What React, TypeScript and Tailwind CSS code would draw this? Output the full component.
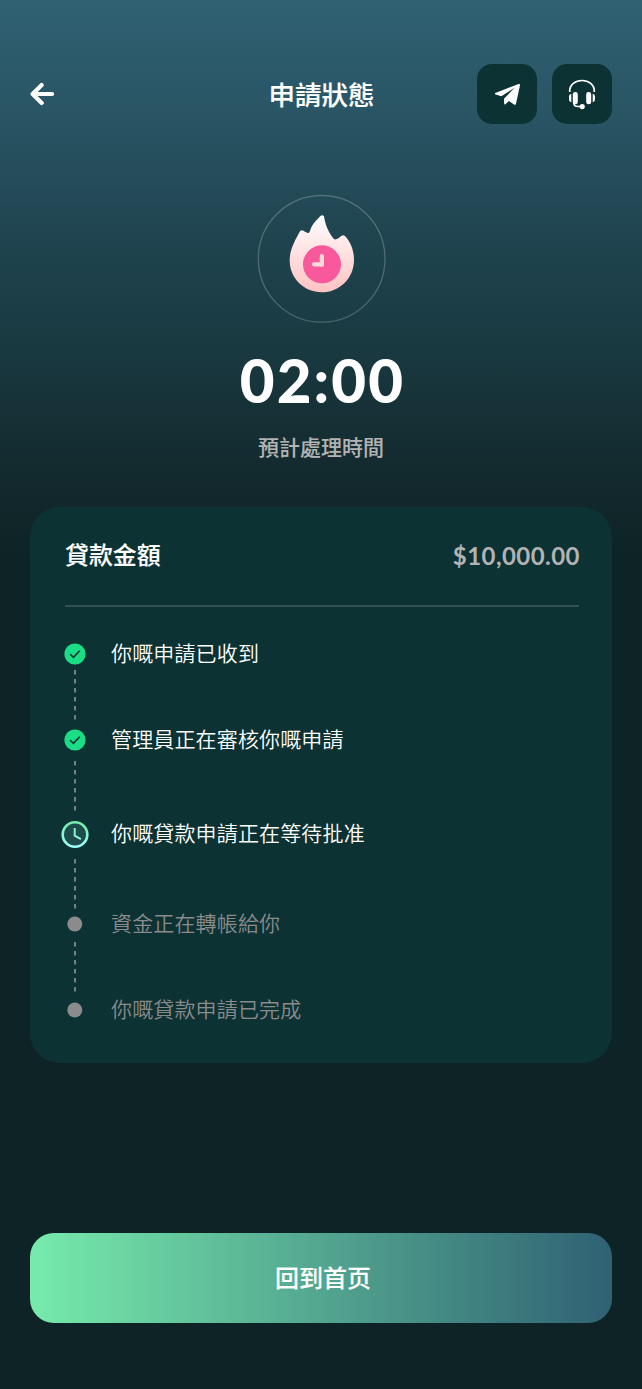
import clsx from "clsx";

type StepStatus = "done" | "active" | "pending";

type Step = {
  label: string;
  status: StepStatus;
  connector?: string;
};

const steps: Step[] = [
  { label: "你嘅申請已收到", status: "done", connector: "h-[58px] pt-[2px]" },
  { label: "管理員正在審核你嘅申請", status: "done", connector: "h-[66.5px] pt-[7px]" },
  { label: "你嘅貸款申請正在等待批准", status: "active", connector: "h-[61.5px] pt-[10.5px]" },
  { label: "資金正在轉帳給你", status: "pending", connector: "h-[58px] pt-[4px]" },
  { label: "你嘅貸款申請已完成", status: "pending" },
];

function BackIcon() {
  return (
    <svg width="26" height="26" viewBox="0 0 26 26" fill="none" stroke="#fff" strokeWidth="4.2" strokeLinecap="round" strokeLinejoin="round">
      <path d="M11.7 4.1 2.6 13l9.1 8.9M3.500 13h18.600" />
    </svg>
  );
}

function PlaneIcon() {
  return (
    <svg width="26" height="24" viewBox="96 95.500 78 72" fill="#fff">
      <path d="M100 128.500 L170 101.500 Q174.500 100 174 105 L162 161 Q160.500 166 156 163 L141 152.500 L130 162 Q127 164 126.500 160 L126 145.500 L158 113 L118 138.500 L101 133 Q97 131 100 128.500Z" />
    </svg>
  );
}

function HeadsetIcon() {
  return (
    <svg width="28" height="32" viewBox="0 -0.800 28 32" fill="none">
      <path d="M1.700 13.200V12.500C1.700 6 7.200 1.700 14 1.700S26.300 6 26.300 12.500V13.200" stroke="#fff" strokeWidth="1.700" />
      <rect x="4.800" y="13.200" width="5" height="12.300" rx="2.400" fill="#fff" />
      <rect x="18.200" y="13.200" width="5" height="12.300" rx="2.400" fill="#fff" />
      <path d="M3.300 15v8.500C1.800 23 1 21.800 1 20.400v-2.500c0-1.400.8-2.500 2.300-2.900ZM24.700 15v8.500c1.500-.5 2.300-1.700 2.300-3.100v-2.500c0-1.400-.8-2.500-2.300-2.900Z" fill="#fff" />
      <path d="M5.500 23.500c.3 2.900 2 4.200 4.600 4.200h3" stroke="#fff" strokeWidth="1.500" />
      <circle cx="14.200" cy="27.800" r="2.600" fill="#fff" />
    </svg>
  );
}

function FlameTimer() {
  return (
    <svg width="130" height="130" viewBox="33 26 390 390" fill="none">
      <defs>
        <linearGradient id="flame" x1="230" y1="89" x2="230" y2="321" gradientUnits="userSpaceOnUse">
          <stop stopColor="#fff" />
          <stop offset="1" stopColor="#ffc2c2" />
        </linearGradient>
      </defs>
      <circle cx="230" cy="220.500" r="190" stroke="#fff" strokeOpacity="0.22" strokeWidth="4" />
      <path
        d="M227 91 Q233 87 237 93 C241 119 250 141 266 160 Q270 164 275 161 Q281 160 285 155 Q292 146 300 152 C317 170 327 194 327 224 C327 278 284 321 230 321 C177 321 134 279 134 225 C134 194 151 163 165 138 Q169 133 175 136 Q180 139 186 142 Q193 145 195 137 C199 119 214 104 227 91Z"
        fill="url(#flame)"
      />
      <circle cx="231" cy="237" r="57" fill="#f7599c" />
      <path d="M230.500 212v25H207" stroke="#ffd9d9" strokeWidth="12.500" strokeLinecap="round" strokeLinejoin="round" />
      <path d="M224.500 231h12.500v12.500h-12.500z" fill="#ffd9d9" />
    </svg>
  );
}

function StepIcon({ status }: { status: StepStatus }) {
  if (status === "done") {
    return (
      <svg width="22" height="22" viewBox="0 0 22 22" fill="none">
        <circle cx="11" cy="11" r="10.600" fill="#1bdd85" />
        <path d="m6.200 11.300 3.200 3.100 6.300-6.700" stroke="#0d3233" strokeWidth="1.600" />
      </svg>
    );
  }

  if (status === "active") {
    return (
      <svg width="28" height="30" viewBox="0 -1.500 28 30" fill="none">
        <defs>
          <linearGradient id="clock" x1="14" y1="0" x2="14" y2="28" gradientUnits="userSpaceOnUse">
            <stop stopColor="#6feca5" />
            <stop offset="1" stopColor="#a2ffff" />
          </linearGradient>
        </defs>
        <circle cx="14" cy="14" r="12.300" fill="#1e4c4c" stroke="url(#clock)" strokeWidth="2.600" />
        <path d="M13.700 7.500v7.700l6.200 3.400" stroke="url(#clock)" strokeWidth="2" />
      </svg>
    );
  }

  return (
    <svg width="16" height="16" viewBox="0 0 16 16">
      <circle cx="7.800" cy="8" r="7.500" fill="#8b8b8b" />
    </svg>
  );
}

function Connector({ className }: { className: string }) {
  return (
    <div className={clsx("flex w-7 justify-center", className)}>
      <svg width="2" height="50" viewBox="0 0 2 50">
        <path d="M1 0v50" stroke="#868b8b" strokeWidth="1.800" strokeDasharray="4.400 4.600" />
      </svg>
    </div>
  );
}

export default function App() {
  return (
    <main className="flex h-[1389px] w-full flex-col bg-[#0e2325] bg-[linear-gradient(180deg,#2f6173_0px,#295463_120px,#1f444f_240px,#193940_350px,#132a2e_470px,#0e2325_555px)] px-[30px] font-[Lato,'Noto_Sans_CJK_TC',sans-serif] text-white">
      <header className="grid grid-cols-[1fr_auto_1fr] items-center pt-[64.4px]">
        <button aria-label="返回" className="-mt-px justify-self-start">
          <BackIcon />
        </button>
        <h1 className="pt-px pl-px text-[26.5px] leading-10 font-medium [-webkit-text-stroke:0.15px]">申請狀態</h1>
        <div className="flex gap-[15px] justify-self-end">
          <button aria-label="Telegram" className="flex size-[60px] items-center justify-center rounded-[15px] bg-[#0d3233]">
            <PlaneIcon />
          </button>
          <button aria-label="客服" className="flex size-[60px] items-center justify-center rounded-[15px] bg-[#0d3233]">
            <HeadsetIcon />
          </button>
        </div>
      </header>

      <section className="flex flex-col items-center pt-[69.6px]">
        <FlameTimer />
        <p className="mt-[16px] pl-[3px] text-[60px] leading-[80px] font-black tracking-[2.1px]">02:00</p>
        <p className="mt-[12px] text-[21px] leading-[30px] font-medium text-[#b3b3b3] [-webkit-text-stroke:0.1px]">預計處理時間</p>
      </section>

      <section className="mt-[45px] h-[556px] rounded-[30px] bg-[#0d3233] pr-[33px] pl-[35px]">
        <div className="flex h-[100px] items-center justify-between border-b-2 border-[#315152]">
          <h2 className="-mt-0.5 text-[23.9px] leading-9 font-medium [-webkit-text-stroke:0.15px]">貸款金額</h2>
          <span className="-mr-px pt-px text-[24px] leading-9 font-bold tracking-[0.45px] text-[#b3b3b3]">$10,000.00</span>
        </div>

        <ul className="-ml-1 pt-[33px]">
          {steps.map((step) => (
            <li key={step.label}>
              <div className="flex h-7 items-center gap-[22px]">
                <span className="flex w-7 shrink-0 justify-center">
                  <StepIcon status={step.status} />
                </span>
                <span
                  className={clsx(
                    "-mt-0.5 text-[21px] leading-7 font-[350] tracking-[0.15px]",
                    step.status === "pending" ? "text-[#8b8b8b]" : "text-white",
                  )}
                >
                  {step.label}
                </span>
              </div>
              {step.connector && <Connector className={step.connector} />}
            </li>
          ))}
        </ul>
      </section>

      <button className="mt-[170px] h-[90px] shrink-0 rounded-[24px] bg-[linear-gradient(90deg,#77ebac,#2f6173)] pb-0.5 pl-1 font-['Noto_Sans_CJK_SC',sans-serif] text-[24px] font-medium [-webkit-text-stroke:0.15px]">
        回到首页
      </button>
    </main>
  );
}
